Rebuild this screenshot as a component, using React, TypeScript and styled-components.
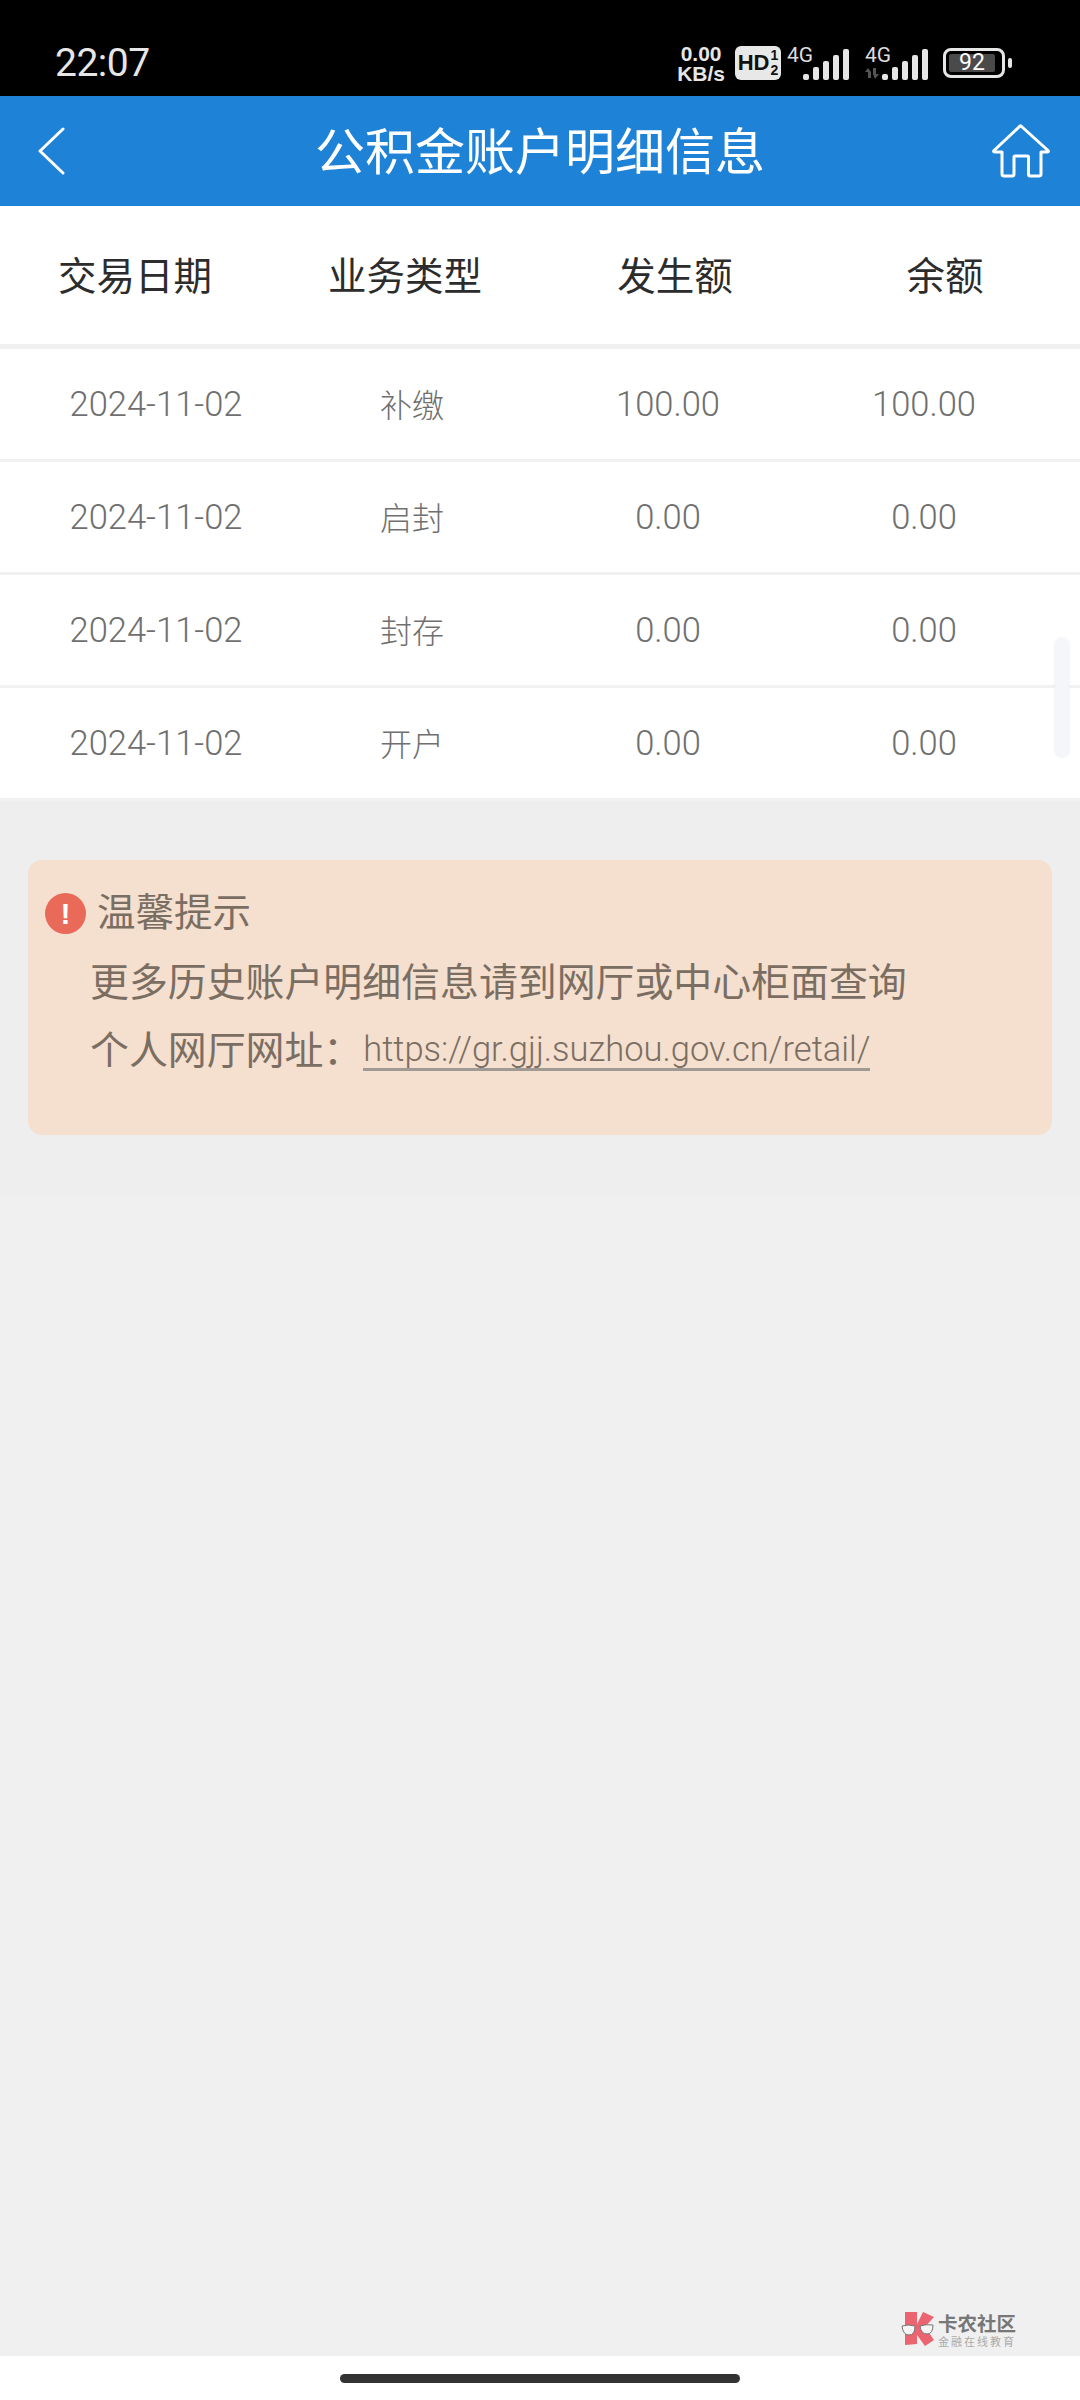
import styled, { createGlobalStyle } from 'styled-components';

const GlobalStyle = createGlobalStyle`
    html, body {
        margin: 0;
        padding: 0;
        background: #f0f0f0;
    }
    * {
        box-sizing: border-box;
    }
`;

const Page = styled.div`
    position: relative;
    width: 1080px;
    height: 2400px;
    display: flex;
    flex-direction: column;
    background: #f0f0f0;
    font-family: "Noto Sans CJK SC", sans-serif;
    overflow: hidden;
`;

const StatusBar = styled.div`
    height: 96px;
    flex: none;
    background: #000;
    color: #e6e6e6;
    display: flex;
    justify-content: space-between;
    align-items: center;
    padding: 29px 68px 0 55px;
`;

const Clock = styled.span`
    font-family: Roboto, sans-serif;
    font-size: 39px;
    letter-spacing: -0.5px;
`;

const StatusIcons = styled.div`
    display: flex;
    align-items: center;
`;

const NetSpeed = styled.div`
    font-family: "Liberation Sans", sans-serif;
    font-weight: 700;
    font-size: 21px;
    line-height: 20px;
    text-align: center;
    color: #e6e6e6;
    margin-top: 2px;
`;

const HdBadge = styled.div`
    width: 46px;
    height: 34px;
    margin-left: 10px;
    border-radius: 6px;
    background: #e8e8e8;
    color: #111;
    font-family: "Liberation Sans", sans-serif;
    font-weight: 700;
    display: flex;
    align-items: center;
    justify-content: center;
    font-size: 22px;
    gap: 1px;
`;

const HdFraction = styled.span`
    display: flex;
    flex-direction: column;
    font-size: 14px;
    line-height: 15px;
`;

const Signal = styled.div<{ $width: number; $gap: number }>`
    position: relative;
    width: ${(p) => p.$width}px;
    height: 34px;
    margin-left: ${(p) => p.$gap}px;
`;

const SignalLabel = styled.span<{ $left: number }>`
    position: absolute;
    left: ${(p) => p.$left}px;
    top: -3px;
    font-family: Roboto, sans-serif;
    font-size: 21px;
    color: #dcdcdc;
`;

const SignalBars = styled.svg`
    position: absolute;
    right: 0;
    bottom: 0;
`;

const Battery = styled.div`
    display: flex;
    align-items: center;
    gap: 3px;
    margin-left: 14px;
`;

const BatteryBody = styled.div`
    width: 62px;
    height: 30px;
    border: 3px solid #e6e6e6;
    border-radius: 8px;
    padding: 3px;
`;

const BatteryFill = styled.div`
    height: 100%;
    width: 92%;
    background: #4a4a4a;
    border-radius: 2px;
    color: #fff;
    font-family: Roboto, sans-serif;
    font-size: 23px;
    line-height: 18px;
    text-align: center;
`;

const BatteryNub = styled.div`
    width: 4px;
    height: 10px;
    border-radius: 2px;
    background: #e6e6e6;
`;

const Header = styled.header`
    height: 110px;
    flex: none;
    background: #1e82d6;
    display: grid;
    grid-template-columns: 1fr auto 1fr;
    align-items: center;
    padding: 0 30px;
`;

const BackLink = styled.div`
    display: flex;
    padding-left: 6px;
`;

const Title = styled.h1`
    margin: 0;
    padding-bottom: 6px;
    color: #fff;
    font-size: 50px;
    line-height: 60px;
    font-weight: 400;
`;

const HomeLink = styled.div`
    justify-self: end;
    display: flex;
`;

const TableHead = styled.div`
    height: 138px;
    flex: none;
    background: #fff;
    display: grid;
    grid-template-columns: repeat(4, 270px);
    align-items: center;
    justify-items: center;
    padding-bottom: 5px;
    color: #2c2c2c;
    font-size: 38.5px;
`;

const Divider = styled.div`
    height: 5px;
    flex: none;
    background: #f0f0f0;
`;

const TableBody = styled.div`
    position: relative;
    flex: none;
    background: #fff;
`;

const Row = styled.div`
    height: 113px;
    padding: 0 28px;
    display: grid;
    grid-template-columns: repeat(4, 256px);
    align-items: center;
    justify-items: center;
    border-bottom: 3px solid #f1f1f1;
    color: #6f6f6f;
    font-family: Roboto, "Noto Sans CJK SC", sans-serif;
    font-size: 34.5px;
    font-weight: 300;

    &:last-child {
        height: 110px;
        border-bottom: none;
    }
`;

const TypeCell = styled.span`
    padding-bottom: 3px;
    font-family: "Noto Sans CJK SC", sans-serif;
    font-size: 32px;
`;

const ScrollThumb = styled.div`
    position: absolute;
    right: 11px;
    top: 289px;
    width: 14px;
    height: 119px;
    border-radius: 7px;
    background: #f5f6fa;
    box-shadow: 0 0 3px #e6e8f0;
`;

const Notice = styled.section`
    flex: none;
    height: 395px;
    padding: 59px 28px 0;
    background: #eeeeee;
`;

const NoticeCard = styled.div`
    height: 275px;
    border-radius: 14px;
    background: #f5dfce;
    padding: 33px 17px 0;
    color: #7a6e63;
    font-size: 38.5px;
`;

const NoticeTitle = styled.div`
    display: flex;
    align-items: center;
    gap: 11px;
    height: 41px;
`;

const NoticeHeading = styled.span`
    padding-bottom: 10px;
`;

const NoticeIcon = styled.span`
    width: 41px;
    height: 41px;
    flex: none;
    border-radius: 50%;
    background: #e96a59;
    color: #fff;
    font-family: "Liberation Sans", sans-serif;
    font-weight: 700;
    font-size: 30px;
    line-height: 41px;
    text-align: center;
`;

const NoticeBody = styled.div`
    margin-top: 11px;
    padding-left: 45px;
`;

const NoticeLine = styled.div`
    height: 68px;
    line-height: 68px;
    font-size: 38.9px;
    white-space: nowrap;
    display: flex;
`;

const SiteLink = styled.span`
    margin-left: 1px;
    margin-top: 14px;
    height: 44px;
    font-family: Roboto, sans-serif;
    font-size: 34.5px;
    font-weight: 300;
    line-height: 44px;
    border-bottom: 3px solid #a09a94;
`;

const Fill = styled.div`
    flex: 1;
`;

const NavBar = styled.div`
    height: 44px;
    flex: none;
    background: #fff;
    display: flex;
    justify-content: center;
    padding-top: 18px;
`;

const GestureHandle = styled.div`
    width: 400px;
    height: 9px;
    border-radius: 5px;
    background: #333;
`;

const Watermark = styled.div`
    position: absolute;
    left: 900px;
    top: 2312px;
    display: flex;
    gap: 4px;
`;

const WatermarkText = styled.div`
    display: flex;
    flex-direction: column;
`;

const WatermarkName = styled.span`
    font-size: 19.5px;
    line-height: 22px;
    font-weight: 700;
    color: #777;
`;

const WatermarkSlogan = styled.span`
    font-size: 11px;
    line-height: 14px;
    letter-spacing: 2px;
    color: #aaa;
`;

function SignalIcon({ arrows }: { arrows?: boolean }) {
    return (
        <Signal $width={arrows ? 66 : 63} $gap={arrows ? 13 : 6}>
            <SignalLabel $left={arrows ? 2 : 0}>4G</SignalLabel>
            <SignalBars width="66" height="32" viewBox="0 0 66 32">
                {arrows && <path d="M2 24l3-4 3 4v6H5v-6zM10 20h3v6l3 0-4 5-2-5z" fill="#555" />}
                <rect x="19" y="26" width="6" height="6" rx="2" fill="#e6e6e6" />
                <rect x="29" y="19" width="6" height="13" rx="2" fill="#e6e6e6" />
                <rect x="39" y="13" width="6" height="19" rx="2" fill="#e6e6e6" />
                <rect x="49" y="7" width="6" height="25" rx="2" fill="#e6e6e6" />
                <rect x="59" y="1" width="6" height="31" rx="2" fill="#e6e6e6" />
            </SignalBars>
        </Signal>
    );
}

const records = [
    { date: '2024-11-02', type: '补缴', amount: '100.00', balance: '100.00' },
    { date: '2024-11-02', type: '启封', amount: '0.00', balance: '0.00' },
    { date: '2024-11-02', type: '封存', amount: '0.00', balance: '0.00' },
    { date: '2024-11-02', type: '开户', amount: '0.00', balance: '0.00' },
];

export default function App() {
    return (
        <Page>
            <GlobalStyle />
            <StatusBar>
                <Clock>22:07</Clock>
                <StatusIcons>
                    <NetSpeed>
                        <div>0.00</div>
                        <div>KB/s</div>
                    </NetSpeed>
                    <HdBadge>
                        HD
                        <HdFraction>
                            <span>1</span>
                            <span>2</span>
                        </HdFraction>
                    </HdBadge>
                    <SignalIcon />
                    <SignalIcon arrows />
                    <Battery>
                        <BatteryBody>
                            <BatteryFill>92</BatteryFill>
                        </BatteryBody>
                        <BatteryNub />
                    </Battery>
                </StatusIcons>
            </StatusBar>

            <Header>
                <BackLink>
                    <svg width="30" height="48" viewBox="0 0 30 48" fill="none">
                        <path d="M27 2L4 24l23 22" stroke="#fff" strokeWidth="3" strokeLinecap="round" strokeLinejoin="round" />
                    </svg>
                </BackLink>
                <Title>公积金账户明细信息</Title>
                <HomeLink>
                    <svg width="58" height="54" viewBox="0 0 58 54" fill="none">
                        <path
                            d="M29 2L56 26.5c.8 1 .2 1.5-1 1.5h-6v22c0 1.5-.5 2-2 2h-9c-1 0-1.500-.5-1.500-2V33c0-.8-.5-1-1-1H23c-.8 0-1 .4-1 1v17c0 1.500-.5 2-1.500 2H12c-1.500 0-2-.5-2-2V28H3c-1.200 0-1.800-.5-1-1.500L27 3c.8-1 1.300-1.500 2-1z"
                            stroke="#fff"
                            strokeWidth="3"
                            strokeLinejoin="round"
                        />
                    </svg>
                </HomeLink>
            </Header>

            <TableHead>
                <span>交易日期</span>
                <span>业务类型</span>
                <span>发生额</span>
                <span>余额</span>
            </TableHead>
            <Divider />

            <TableBody>
                {records.map((r) => (
                    <Row key={r.type}>
                        <span>{r.date}</span>
                        <TypeCell>{r.type}</TypeCell>
                        <span>{r.amount}</span>
                        <span>{r.balance}</span>
                    </Row>
                ))}
                <ScrollThumb />
            </TableBody>

            <Notice>
                <NoticeCard>
                    <NoticeTitle>
                        <NoticeIcon>!</NoticeIcon>
                        <NoticeHeading>温馨提示</NoticeHeading>
                    </NoticeTitle>
                    <NoticeBody>
                        <NoticeLine>更多历史账户明细信息请到网厅或中心柜面查询</NoticeLine>
                        <NoticeLine>
                            个人网厅网址：
                            <SiteLink>https://gr.gjj.suzhou.gov.cn/retail/</SiteLink>
                        </NoticeLine>
                    </NoticeBody>
                </NoticeCard>
            </Notice>

            <Fill />

            <NavBar>
                <GestureHandle />
            </NavBar>

            <Watermark>
                <svg width="34" height="35" viewBox="0 0 34 35">
                    <path d="M5 0h12v12L23 0l11 5-9 10 9 13-9 6-8-11v9L5 33z" fill="#ea6472" />
                    <path d="M2 14q6-2 13 0 0 9-6 9t-7-9z" fill="#f5f5f5" stroke="#777" strokeWidth="1" />
                    <path d="M20 14q6-2 13-1 0 9-6 9t-7-8z" fill="#f5f5f5" stroke="#777" strokeWidth="1" />
                </svg>
                <WatermarkText>
                    <WatermarkName>卡农社区</WatermarkName>
                    <WatermarkSlogan>金融在线教育</WatermarkSlogan>
                </WatermarkText>
            </Watermark>
        </Page>
    );
}
